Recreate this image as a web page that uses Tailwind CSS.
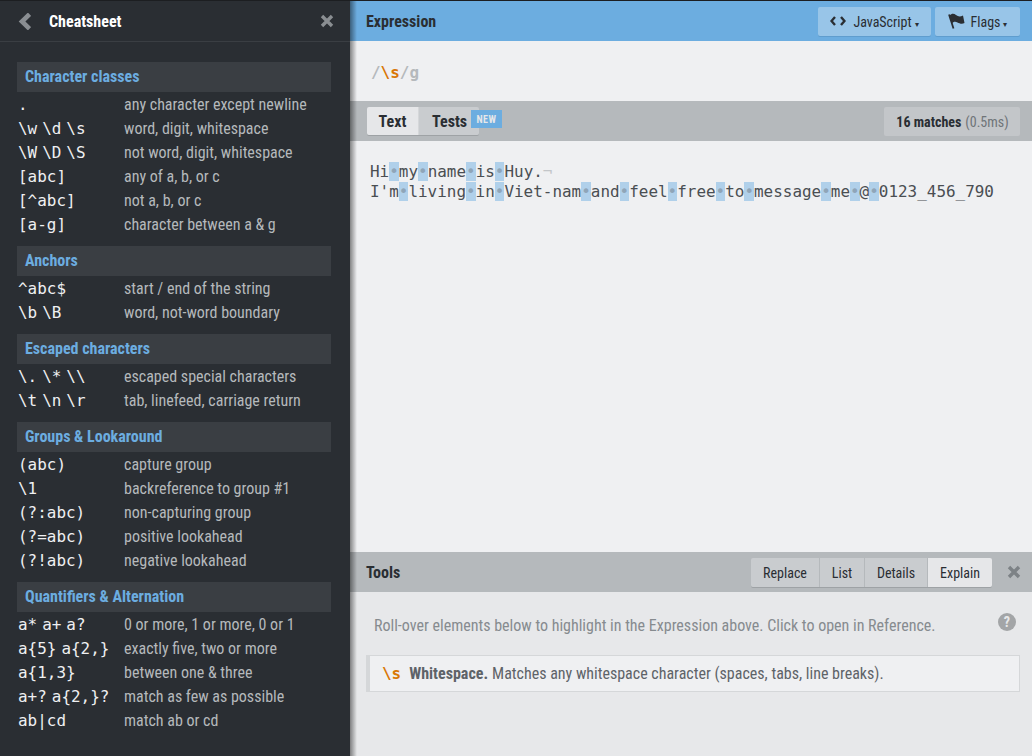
<!DOCTYPE html>
<html><head><meta charset="utf-8">
<script src="https://cdn.jsdelivr.net/npm/@tailwindcss/browser@4"></script>
</head>
<body class="m-0 overflow-hidden">
<div class="flex w-[1032px] h-[756px] overflow-hidden border-t border-[#1c1e21] font-['Roboto',sans-serif] [font-stretch:75%]">
  <aside class="w-[350px] shrink-0 bg-[#2a2e33] flex flex-col">
    <div class="h-[41px] shrink-0 border-b border-[#3a3e43] flex items-center pl-[18px] pr-[16px]">
      <svg width="13" height="17" viewBox="0 0 13 17" class="text-[#8a8e92]"><path d="M11.5 1.2 L4 8.5 L11.5 15.8" fill="none" stroke="currentColor" stroke-width="4.6"/></svg>
      <span class="ml-[18px] mt-[2px] text-white font-bold text-[16px]">Cheatsheet</span>
      <svg width="14" height="14" viewBox="0 0 14 14" class="ml-auto text-[#8a8e92]"><path d="M2 2 L12 12 M12 2 L2 12" fill="none" stroke="currentColor" stroke-width="3.4"/></svg>
    </div>
    <div class="pl-[17px] pr-[19px] pt-[20px] flex flex-col gap-[9px]">
      <section>
        <h3 class="h-[30px] mb-px bg-[#3a3e43] pl-2 flex items-center text-[#6cade0] font-bold text-[16px]">Character classes</h3>
        <div class="grid grid-cols-[107px_1fr] auto-rows-[24px] items-center text-[16px] text-[#b5b9bc]">
          <code class="pl-px font-['DejaVu_Sans_Mono',monospace] text-[15.94px] [word-spacing:-4.6px] text-[#eff0f2]">.</code><span>any character except newline</span>
          <code class="pl-px font-['DejaVu_Sans_Mono',monospace] text-[15.94px] [word-spacing:-4.6px] text-[#eff0f2]">\w \d \s</code><span>word, digit, whitespace</span>
          <code class="pl-px font-['DejaVu_Sans_Mono',monospace] text-[15.94px] [word-spacing:-4.6px] text-[#eff0f2]">\W \D \S</code><span>not word, digit, whitespace</span>
          <code class="pl-px font-['DejaVu_Sans_Mono',monospace] text-[15.94px] [word-spacing:-4.6px] text-[#eff0f2]">[abc]</code><span>any of a, b, or c</span>
          <code class="pl-px font-['DejaVu_Sans_Mono',monospace] text-[15.94px] [word-spacing:-4.6px] text-[#eff0f2]">[^abc]</code><span>not a, b, or c</span>
          <code class="pl-px font-['DejaVu_Sans_Mono',monospace] text-[15.94px] [word-spacing:-4.6px] text-[#eff0f2]">[a-g]</code><span>character between a &amp; g</span>
        </div>
      </section>
      <section>
        <h3 class="h-[30px] mb-px bg-[#3a3e43] pl-2 flex items-center text-[#6cade0] font-bold text-[16px]">Anchors</h3>
        <div class="grid grid-cols-[107px_1fr] auto-rows-[24px] items-center text-[16px] text-[#b5b9bc]">
          <code class="pl-px font-['DejaVu_Sans_Mono',monospace] text-[15.94px] [word-spacing:-4.6px] text-[#eff0f2]">^abc$</code><span>start / end of the string</span>
          <code class="pl-px font-['DejaVu_Sans_Mono',monospace] text-[15.94px] [word-spacing:-4.6px] text-[#eff0f2]">\b \B</code><span>word, not-word boundary</span>
        </div>
      </section>
      <section>
        <h3 class="h-[30px] mb-px bg-[#3a3e43] pl-2 flex items-center text-[#6cade0] font-bold text-[16px]">Escaped characters</h3>
        <div class="grid grid-cols-[107px_1fr] auto-rows-[24px] items-center text-[16px] text-[#b5b9bc]">
          <code class="pl-px font-['DejaVu_Sans_Mono',monospace] text-[15.94px] [word-spacing:-4.6px] text-[#eff0f2]">\. \* \\</code><span>escaped special characters</span>
          <code class="pl-px font-['DejaVu_Sans_Mono',monospace] text-[15.94px] [word-spacing:-4.6px] text-[#eff0f2]">\t \n \r</code><span>tab, linefeed, carriage return</span>
        </div>
      </section>
      <section>
        <h3 class="h-[30px] mb-px bg-[#3a3e43] pl-2 flex items-center text-[#6cade0] font-bold text-[16px]">Groups &amp; Lookaround</h3>
        <div class="grid grid-cols-[107px_1fr] auto-rows-[24px] items-center text-[16px] text-[#b5b9bc]">
          <code class="pl-px font-['DejaVu_Sans_Mono',monospace] text-[15.94px] [word-spacing:-4.6px] text-[#eff0f2]">(abc)</code><span>capture group</span>
          <code class="pl-px font-['DejaVu_Sans_Mono',monospace] text-[15.94px] [word-spacing:-4.6px] text-[#eff0f2]">\1</code><span>backreference to group #1</span>
          <code class="pl-px font-['DejaVu_Sans_Mono',monospace] text-[15.94px] [word-spacing:-4.6px] text-[#eff0f2]">(?:abc)</code><span>non-capturing group</span>
          <code class="pl-px font-['DejaVu_Sans_Mono',monospace] text-[15.94px] [word-spacing:-4.6px] text-[#eff0f2]">(?=abc)</code><span>positive lookahead</span>
          <code class="pl-px font-['DejaVu_Sans_Mono',monospace] text-[15.94px] [word-spacing:-4.6px] text-[#eff0f2]">(?!abc)</code><span>negative lookahead</span>
        </div>
      </section>
      <section>
        <h3 class="h-[30px] mb-px bg-[#3a3e43] pl-2 flex items-center text-[#6cade0] font-bold text-[16px]">Quantifiers &amp; Alternation</h3>
        <div class="grid grid-cols-[107px_1fr] auto-rows-[24px] items-center text-[16px] text-[#b5b9bc]">
          <code class="pl-px font-['DejaVu_Sans_Mono',monospace] text-[15.94px] [word-spacing:-4.6px] text-[#eff0f2]">a* a+ a?</code><span>0 or more, 1 or more, 0 or 1</span>
          <code class="pl-px font-['DejaVu_Sans_Mono',monospace] text-[15.94px] [word-spacing:-4.6px] text-[#eff0f2]">a{5} a{2,}</code><span>exactly five, two or more</span>
          <code class="pl-px font-['DejaVu_Sans_Mono',monospace] text-[15.94px] [word-spacing:-4.6px] text-[#eff0f2]">a{1,3}</code><span>between one &amp; three</span>
          <code class="pl-px font-['DejaVu_Sans_Mono',monospace] text-[15.94px] [word-spacing:-4.6px] text-[#eff0f2]">a+? a{2,}?</code><span>match as few as possible</span>
          <code class="pl-px font-['DejaVu_Sans_Mono',monospace] text-[15.94px] [word-spacing:-4.6px] text-[#eff0f2]">ab|cd</code><span>match ab or cd</span>
        </div>
      </section>
    </div>
  </aside>
  <main class="flex-1 flex flex-col relative text-[#2a2e33]">
    <div class="absolute inset-y-0 left-0 w-[7px] bg-gradient-to-r from-black/45 to-transparent"></div>
    <div class="h-[40px] bg-[#6cade0] flex items-center pl-[16px] pr-[12px] shrink-0">
      <span class="font-bold text-[16px] mt-[2px]">Expression</span>
      <div class="ml-auto flex gap-1">
        <button class="h-[29px] w-[113px] bg-[#98c5e8] rounded-[2px] shadow-[0_1px_0_#5f9dce] flex items-center justify-center text-[14px] gap-[7px]">
          <svg width="16" height="10" viewBox="0 0 16 10"><path d="M5 1 L1.5 5 L5 9 M11 1 L14.5 5 L11 9" fill="none" stroke="currentColor" stroke-width="2.4"/></svg>
          <span class="mt-[2px]">JavaScript<span class="text-[8px] ml-[3px]">▾</span></span>
        </button>
        <button class="h-[29px] w-[85px] bg-[#98c5e8] rounded-[2px] shadow-[0_1px_0_#5f9dce] flex items-center justify-center text-[14px] gap-[6px]">
          <svg width="17" height="16" viewBox="0 0 17 16"><path d="M1 1.5 L5.5 15.5" fill="none" stroke="currentColor" stroke-width="1.8"/><path d="M1.5 2.5 C4 0 6 0.5 8 2 C10 3.5 12 4 15 2.5 L16.5 10 C14 11.5 11.5 10.5 9.5 9.5 C7.5 8.5 5.5 8.5 3.8 10.5 Z" fill="currentColor"/></svg>
          <span class="mt-[2px]">Flags<span class="text-[8px] ml-[3px]">▾</span></span>
        </button>
      </div>
    </div>
    <div class="h-[60px] bg-[#eff0f2] flex items-center pl-[21px] pt-[4px] font-['DejaVu_Sans_Mono',monospace] text-[15.94px] font-bold shrink-0">
      <span class="text-[#b5b9bc]">/</span><span class="text-[#d97706]">\s</span><span class="text-[#b5b9bc]">/g</span>
    </div>
    <div class="h-[40px] bg-[#b5b9bc] flex items-center px-[12px] pl-[17px] shrink-0">
      <div class="flex h-[28px] rounded-[2px] shadow-[0_1px_0_#9ea2a5] font-bold text-[16px]">
        <span class="w-[52px] pt-[2px] bg-[#e6e7e9] flex items-center justify-center rounded-l-[2px] border-r border-[#d5d7d9]">Text</span>
        <span class="w-[60px] pt-[2px] bg-[#c9cccf] flex items-center pl-[13px] rounded-r-[2px]">Tests</span>
      </div>
      <span class="relative -left-[8px] -top-[2px] h-[18px] w-[31px] bg-[#6cade0] text-[#e6e7e9] text-[10px] font-bold flex items-center justify-center tracking-[0.5px]">NEW</span>
      <span class="ml-auto h-[29px] w-[136px] pt-[2px] pl-px bg-[#c3c6c9] rounded-[2px] flex items-center justify-center text-[14px] text-[#6f7478]"><b class="text-[#2a2e33] mr-1">16 matches</b>(0.5ms)</span>
    </div>
    <div class="h-[411px] shrink-0 bg-[#eff0f2] pl-[20px] pt-[21px] font-['DejaVu_Sans_Mono',monospace] text-[15.94px] leading-[20px] text-[#4a4e52]">
      <div class="whitespace-pre">Hi<i class="not-italic bg-[#b0d0ea] text-[#8fa5b8]">•</i>my<i class="not-italic bg-[#b0d0ea] text-[#8fa5b8]">•</i>name<i class="not-italic bg-[#b0d0ea] text-[#8fa5b8]">•</i>is<i class="not-italic bg-[#b0d0ea] text-[#8fa5b8]">•</i>Huy.<span class="text-[#c3c6c9]">¬</span></div>
      <div class="whitespace-pre">I'm<i class="not-italic bg-[#b0d0ea] text-[#8fa5b8]">•</i>living<i class="not-italic bg-[#b0d0ea] text-[#8fa5b8]">•</i>in<i class="not-italic bg-[#b0d0ea] text-[#8fa5b8]">•</i>Viet-nam<i class="not-italic bg-[#b0d0ea] text-[#8fa5b8]">•</i>and<i class="not-italic bg-[#b0d0ea] text-[#8fa5b8]">•</i>feel<i class="not-italic bg-[#b0d0ea] text-[#8fa5b8]">•</i>free<i class="not-italic bg-[#b0d0ea] text-[#8fa5b8]">•</i>to<i class="not-italic bg-[#b0d0ea] text-[#8fa5b8]">•</i>message<i class="not-italic bg-[#b0d0ea] text-[#8fa5b8]">•</i>me<i class="not-italic bg-[#b0d0ea] text-[#8fa5b8]">•</i>@<i class="not-italic bg-[#b0d0ea] text-[#8fa5b8]">•</i>0123_456_790</div>
    </div>
    <div class="h-[40px] bg-[#b5b9bc] flex items-center pl-[16px] pr-[11px] shrink-0">
      <span class="font-bold text-[16px] mt-[2px]">Tools</span>
      <div class="ml-auto flex h-[29px] gap-px rounded-[2px] shadow-[0_1px_0_#9ea2a5] text-[14px]">
        <span class="w-[68px] pt-[2px] bg-[#c9cccf] flex items-center justify-center rounded-l-[2px]">Replace</span>
        <span class="w-[44px] pt-[2px] bg-[#c9cccf] flex items-center justify-center">List</span>
        <span class="w-[62px] pt-[2px] bg-[#c9cccf] flex items-center justify-center">Details</span>
        <span class="w-[64px] pt-[2px] bg-[#e6e7e9] flex items-center justify-center rounded-r-[2px]">Explain</span>
      </div>
      <svg width="14" height="14" viewBox="0 0 14 14" class="ml-[15px] text-[#7d8286]"><path d="M2 2 L12 12 M12 2 L2 12" fill="none" stroke="currentColor" stroke-width="3.4"/></svg>
    </div>
    <div class="flex-1 bg-[#e7e8ea] pl-[16px] pr-[12px] flex flex-col">
      <div class="h-[63px] flex items-center pl-[8px] pr-[4px] text-[#868b8f] text-[16px]">
        <span class="mt-[4px]">Roll-over elements below to highlight in the Expression above. Click to open in Reference.</span>
        <svg width="18" height="18" viewBox="0 0 18 18" class="ml-auto -mt-[4px]"><circle cx="9" cy="9" r="9" fill="#a3a5a7"/><text x="9" y="14" text-anchor="middle" font-size="14" font-weight="700" fill="#e7e8ea" font-family="Roboto">?</text></svg>
      </div>
      <div class="h-[37px] bg-[#eff0f2] border border-[#d5d7d9] border-l-[4px] flex items-center pl-[12px] text-[16px] text-[#5e6368]">
        <code class="font-['DejaVu_Sans_Mono',monospace] font-bold text-[#d97706] text-[15.94px] mr-[8px]">\s</code>
        <b class="mr-1">Whitespace.</b> Matches any whitespace character (spaces, tabs, line breaks).
      </div>
    </div>
  </main>
</div>
</body></html>
